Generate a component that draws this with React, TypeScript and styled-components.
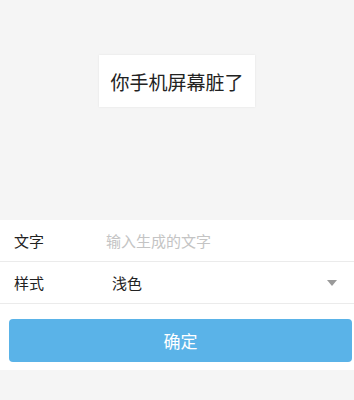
import React from 'react';
import styled, { createGlobalStyle } from 'styled-components';

const GlobalStyle = createGlobalStyle`
  html, body {
    margin: 0;
    padding: 0;
    background: #f5f5f5;
    font-family: "Noto Sans CJK SC", "Noto Sans", sans-serif;
  }
`;

const Page = styled.div`
  width: 354px;
  height: 400px;
  display: flex;
  flex-direction: column;
  background: #f5f5f5;
`;

const Preview = styled.div`
  height: 220px;
  display: flex;
  justify-content: center;
  align-items: flex-start;
  padding-top: 55px;
  box-sizing: border-box;
`;

const Card = styled.div`
  background: #fff;
  padding: 0 11px;
  height: 52px;
  display: flex;
  align-items: center;
  font-size: 19px;
  color: #222;
  box-shadow: 0 0 2px rgba(0, 0, 0, 0.08);
`;

const Form = styled.div`
  background: #fff;
  padding-bottom: 8px;
`;

const Row = styled.div`
  display: flex;
  align-items: center;
  height: 41px;
  padding: 0 14px;
  border-bottom: 1px solid #ebebeb;
  font-size: 15px;
`;

const Label = styled.span`
  width: 92px;
  color: #222;
`;

const Placeholder = styled.span`
  color: #c4c4c4;
`;

const Value = styled.span<{ $indent?: number }>`
  flex: 1;
  color: #222;
  padding-left: ${p => p.$indent ?? 0}px;
`;

const Arrow = styled.span`
  width: 0;
  height: 0;
  border-left: 5px solid transparent;
  border-right: 5px solid transparent;
  border-top: 6px solid #9a9a9a;
  margin-right: 3px;
`;

const ButtonWrap = styled.div`
  padding: 15px 2px 0 9px;
`;

const Confirm = styled.button`
  width: 100%;
  height: 43px;
  border: none;
  border-radius: 4px;
  background: #5ab3e8;
  color: #fff;
  font-family: inherit;
  font-size: 17px;
`;

const App: React.FC = () => {
  return (
    <Page>
      <GlobalStyle />
      <Preview>
        <Card>你手机屏幕脏了</Card>
      </Preview>
      <Form>
        <Row>
          <Label>文字</Label>
          <Placeholder>输入生成的文字</Placeholder>
        </Row>
        <Row>
          <Label>样式</Label>
          <Value $indent={6}>浅色</Value>
          <Arrow />
        </Row>
        <ButtonWrap>
          <Confirm>确定</Confirm>
        </ButtonWrap>
      </Form>
    </Page>
  );
};

export default App;
